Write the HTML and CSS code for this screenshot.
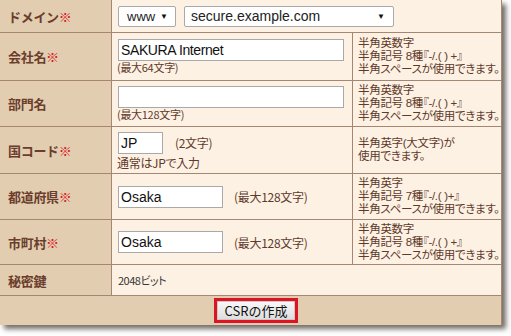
FILE: index.html
```html
<!DOCTYPE html>
<html lang="ja">
<head>
<meta charset="utf-8">
<link rel="stylesheet" href="styles.css">
</head>
<body>
<div class="panel">
  <div class="grid">
    <div class="lbl r1">ドメイン<span class="req">※</span></div>
    <div class="val span2 r1 row-inline">
      <div class="sel sel-www"><span>www</span><span class="arr">▼</span></div>
      <div class="sel sel-dom"><span>secure.example.com</span><span class="arr">▼</span></div>
    </div>

    <div class="lbl r2">会社名<span class="req">※</span></div>
    <div class="val r2">
      <div class="inp inp-wide">SAKURA Internet</div>
      <div class="small">(最大64文字)</div>
    </div>
    <div class="note r2">半角英数字<br>半角記号 8種『-/.( ) +』<br>半角スペースが使用できます。</div>

    <div class="lbl r3">部門名</div>
    <div class="val r3">
      <div class="inp inp-wide"></div>
      <div class="small">(最大128文字)</div>
    </div>
    <div class="note r3">半角英数字<br>半角記号 8種『-/.( ) +』<br>半角スペースが使用できます。</div>

    <div class="lbl r4">国コード<span class="req">※</span></div>
    <div class="val r4">
      <div class="line"><div class="inp inp-jp">JP</div><span class="small side">(2文字)</span></div>
      <div class="small sub">通常はJPで入力</div>
    </div>
    <div class="note r4">半角英字(大文字)が<br>使用できます。</div>

    <div class="lbl r5">都道府県<span class="req">※</span></div>
    <div class="val r5">
      <div class="line"><div class="inp inp-mid">Osaka</div><span class="small side2">(最大128文字)</span></div>
    </div>
    <div class="note r5">半角英字<br>半角記号 7種『-/.( )+』<br>半角スペースが使用できます。</div>

    <div class="lbl r6">市町村<span class="req">※</span></div>
    <div class="val r6">
      <div class="line"><div class="inp inp-mid">Osaka</div><span class="small side2">(最大128文字)</span></div>
    </div>
    <div class="note r6">半角英数字<br>半角記号 8種『-/.( ) +』<br>半角スペースが使用できます。</div>

    <div class="lbl r7">秘密鍵</div>
    <div class="val span2 r7"><span class="bits">2048ビット</span></div>

    <div class="foot">
      <div class="btnwrap"><button class="btn" type="button">CSRの作成</button></div>
    </div>
  </div>
</div>
</body>
</html>
```
FILE: styles.css
```css
* { box-sizing: border-box; }
html, body { margin: 0; padding: 0; background: #ffffff; }
body {
  font-family: "Noto Sans CJK JP", "Liberation Sans", sans-serif;
  width: 511px;
  height: 336px;
  overflow: hidden;
}
.panel {
  width: 502px;
  box-shadow: 4px 4px 5px rgba(40, 30, 20, 0.65);
  background: #e3cdb0;
}
.grid {
  display: grid;
  grid-template-columns: 112px 241px 149px;
  grid-template-rows: 33px 48px 46px 47px 46px 45px 31px 29px;
}
.lbl {
  background: #e3cdb0;
  border-right: 1px solid #a58672;
  border-bottom: 1px solid #a58672;
  display: flex;
  align-items: center;
  padding-left: 8px;
  font-size: 13px;
  font-weight: bold;
  color: #6a3d2c;
  letter-spacing: -0.3px;
}
.req { color: #d8141c; font-weight: bold; }
.val {
  background: #fdf1e4;
  border-right: 1px solid #a58672;
  border-bottom: 1px solid #a58672;
  display: flex;
  flex-direction: column;
  justify-content: center;
  padding-left: 6px;
}
.span2 { grid-column: span 2; border-right: 1px solid #a58672; }
.row-inline { flex-direction: row; align-items: center; justify-content: flex-start; gap: 8px; }
.note {
  background: #fdf1e4;
  border-bottom: 1px solid #a58672;
  border-right: 1px solid #a58672;
  display: flex;
  align-items: center;
  padding-left: 5px;
  font-family: "Liberation Sans", "Noto Sans CJK JP", sans-serif;
  font-size: 11.5px;
  line-height: 13px;
  color: #5e3a2b;
  white-space: nowrap;
  font-feature-settings: "palt";
  letter-spacing: -0.3px;
}
.sel {
  height: 21px;
  background: #ffffff;
  border: 1px solid #a9a9a9;
  border-radius: 2px;
  display: flex;
  align-items: center;
  justify-content: space-between;
  font-family: "Liberation Sans", sans-serif;
  font-size: 14px;
  color: #222;
}
.sel-www { width: 58px; padding: 0 7px 0 8px; font-size: 13px; }
.sel-dom { width: 210px; padding: 0 8px 0 6px; }
.arr { font-size: 8px; color: #111; }
.inp {
  height: 22px;
  background: #ffffff;
  border: 1px solid #a9a9a9;
  font-family: "Liberation Sans", sans-serif;
  font-size: 14px;
  line-height: 21px;
  padding-left: 2px;
  color: #111;
}
.inp-wide { width: 226px; letter-spacing: -0.4px; }
.inp-jp { width: 45px; }
.inp-mid { width: 105px; }
.small {
  font-size: 11px;
  line-height: 13px;
  color: #5e3a2b;
  margin-left: -1px;
  letter-spacing: -0.3px;
}
.line { display: flex; align-items: center; }
.side { margin-left: 12px; font-size: 12px; }
.side2 { margin-left: 11px; font-size: 12px; }
.sub { margin-top: 2px; font-size: 12px; font-feature-settings: "palt"; }
.bits { font-size: 11px; color: #333; letter-spacing: -0.5px; font-feature-settings: "palt"; }
.foot {
  grid-column: 1 / span 3;
  background: #e3cdb0;
  border-right: 1px solid #a58672;
  display: flex;
  justify-content: center;
  align-items: center;
  padding-left: 11px;
}
.btnwrap {
  border: 3px solid #dd1423;
  width: 84px;
  height: 25px;
  display: flex;
}
.btn {
  flex: 1;
  margin: 0;
  border: 1px solid #c8c8c8;
  background: linear-gradient(#f7f7f7, #dedede);
  font-family: "Noto Sans CJK JP", sans-serif;
  font-size: 13px;
  line-height: 15px;
  color: #111;
  padding: 0;
}
```
